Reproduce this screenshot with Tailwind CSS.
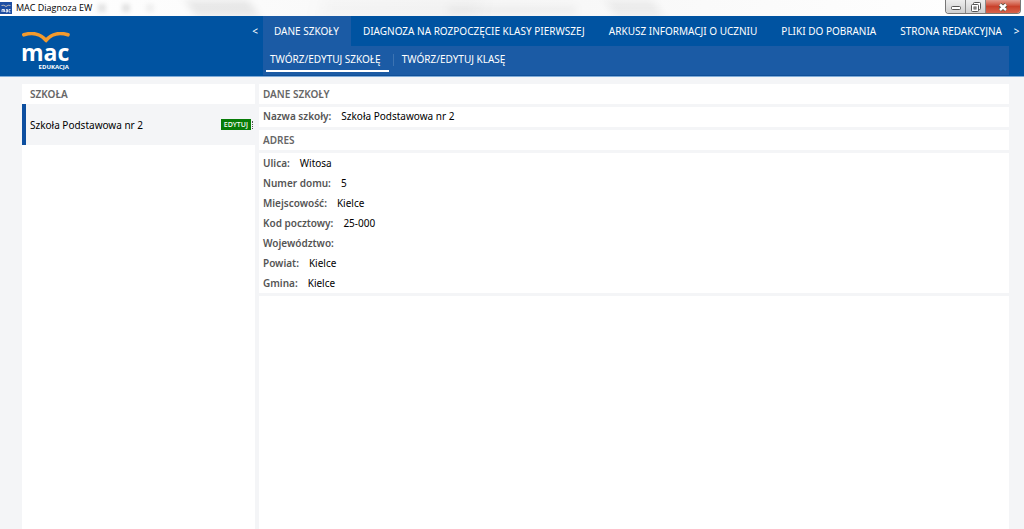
<!DOCTYPE html>
<html lang="pl">
<head>
<meta charset="utf-8">
<meta name="viewport" content="width=device-width, initial-scale=1">
<title>MAC Diagnoza EW</title>
<script src="https://cdn.jsdelivr.net/npm/@tailwindcss/browser@4"></script>
</head>
<body class="flex min-h-screen flex-col bg-[#f4f5f7] font-['Noto_Sans','Open_Sans',sans-serif] text-[10px] leading-5 text-black">
  <div class="relative flex h-4 items-center justify-between overflow-hidden bg-gradient-to-r from-white via-[#f7f7f7] to-white">
    <div class="absolute top-0 left-80 h-4 w-40 -skew-x-12 bg-black/3 blur-sm" aria-hidden="true"></div>
    <div class="absolute top-0 left-[190px] h-4 w-16 skew-x-30 bg-black/8 blur-xs" aria-hidden="true"></div>
    <div class="absolute top-0 left-[610px] h-4 w-12 skew-x-30 bg-black/5 blur-xs" aria-hidden="true"></div>
    <div class="absolute top-2 left-[448px] h-1 w-32 bg-black/8 blur-xs" aria-hidden="true"></div>
    <div class="absolute top-1 left-[98px] flex gap-4 blur-[2px]" aria-hidden="true"><span class="size-2 bg-black/10"></span><span class="size-2 bg-black/10"></span><span class="size-2 bg-black/5"></span></div>
    <div class="relative flex items-center gap-1">
      <svg class="h-3 w-3" viewBox="0 0 12 12" aria-hidden="true"><rect width="12" height="12" fill="#1f4fa3"/><path d="M1.500 3.500Q4 2.500 6 4.500 8 2.500 10.500 3.500" fill="none" stroke="#b9b7b8" stroke-width="1"/><path d="M2 10V7.500M2 7.500h2.500V10M3.300 7.500V10M6 7.500h1.500V10H6V8.800h1.500M10.500 7.500H9V10h1.500" fill="none" stroke="#fff" stroke-width=".8"/></svg>
      <h1 class="font-['Open_Sans',sans-serif] text-[9px] leading-4">MAC Diagnoza EW</h1>
    </div>
    <div class="relative mr-[3px] flex h-3.5 self-start overflow-hidden rounded-b border border-t-0 border-[#777]">
      <button class="flex w-5 items-center justify-center border-r border-[#888] bg-gradient-to-b from-[#eee] to-[#cfcfcf]" aria-label="Minimalizuj"><svg class="h-3 w-3" viewBox="0 0 12 12"><rect x="1.500" y="5.500" width="9" height="3" rx="1" fill="#fff" stroke="#555"/></svg></button>
      <button class="flex w-5 items-center justify-center border-r border-[#888] bg-gradient-to-b from-[#eee] to-[#cfcfcf]" aria-label="Przywróć"><svg class="h-3 w-3" viewBox="0 0 12 12"><g fill="#fff" stroke="#555"><rect x="3.500" y="1.500" width="7" height="7" rx="1"/><rect x="1.500" y="3.500" width="7" height="7" rx="1"/><rect x="4" y="6" width="2" height="2"/></g></svg></button>
      <button class="flex w-[34px] items-center justify-center bg-gradient-to-b from-[#e39a8c] via-[#c9412b] to-[#d8634a]" aria-label="Zamknij"><svg class="h-3 w-3" viewBox="0 0 12 12"><path d="M3 3.500l6 5.500M9 3.500L3 9" stroke="#554" stroke-width="4"/><path d="M3 3.500l6 5.500M9 3.500L3 9" stroke="#fff" stroke-width="2.400"/></svg></button>
    </div>
  </div>

  <header class="flex h-[61px] border-b border-[#7fabd8] bg-[#0053a1] text-white">
    <div class="w-[247px] shrink-0 pt-4 pl-[22px]">
      <svg class="h-[38px] w-12" viewBox="0 0 48 38" role="img" aria-label="mac Edukacja">
        <path d="M1.800 2.800C9 .5 18 1 24 8.500 30 1 39 .5 46 2.800" fill="none" stroke="#f39a2d" stroke-width="3.600" stroke-linecap="round" stroke-linejoin="round"/>
        <text x="-1" y="29" font-family="Open Sans, sans-serif" font-size="23" font-weight="700" fill="#fff">mac</text>
        <text x="47" y="37" text-anchor="end" font-family="Open Sans, sans-serif" font-size="6" font-weight="700" fill="#fff">EDUKACJA</text>
      </svg>
    </div>
    <button class="h-[30px] w-4 shrink-0 text-center" aria-label="Poprzednie">&lt;</button>
    <div class="min-w-0 flex-1">
      <nav class="flex h-[30px] whitespace-nowrap leading-[30px]" aria-label="Główne">
        <a href="#" class="bg-[#1b5ba5] pr-3 pl-[11px]" aria-current="page">DANE SZKOŁY</a>
        <a href="#" class="px-3">DIAGNOZA NA ROZPOCZĘCIE KLASY PIERWSZEJ</a>
        <a href="#" class="px-3">ARKUSZ INFORMACJI O UCZNIU</a>
        <a href="#" class="px-3">PLIKI DO POBRANIA</a>
        <a href="#" class="pl-3">STRONA REDAKCYJNA</a>
      </nav>
      <nav class="flex h-[30px] border-b border-[#0f4f98] bg-[#1b5ba5] px-[3px] whitespace-nowrap leading-[26px]" aria-label="Szkoła">
        <a href="#" class="h-[26px] border-b-2 border-white pr-2 pl-1" aria-current="page">TWÓRZ/EDYTUJ SZKOŁĘ</a>
        <span class="mt-2 ml-1 h-3 border-l border-white/15" aria-hidden="true"></span>
        <a href="#" class="h-[26px] px-2">TWÓRZ/EDYTUJ KLASĘ</a>
      </nav>
    </div>
    <button class="h-[30px] w-[15px] shrink-0 text-center" aria-label="Następne">&gt;</button>
  </header>

  <main class="flex flex-1 gap-1 pt-[7px] pr-[15px] pl-[22px]">
    <aside class="w-[233px] shrink-0 bg-white">
      <h2 class="px-2 font-semibold text-[#666]">SZKOŁA</h2>
      <div class="flex h-[41px] items-center justify-between border-l-4 border-[#0d4fa0] bg-[#f4f5f7] pr-0.5 pl-1">
        <span>Szkoła Podstawowa nr 2</span>
        <button class="flex items-center"><span class="h-[11px] bg-[#087c08] px-[3px] text-[7px] leading-[11px] font-medium text-white">EDYTUJ</span><span class="ml-px h-2 border-l border-dotted border-[#555]"></span></button>
      </div>
    </aside>
    <div class="flex min-w-0 flex-1 flex-col gap-[3px]">
      <h2 class="bg-white px-1 font-semibold text-[#666]">DANE SZKOŁY</h2>
      <dl class="bg-white px-1 pb-0.5 leading-[18px]"><div class="flex gap-2.5"><dt class="font-semibold text-[#555]">Nazwa szkoły:</dt><dd>Szkoła Podstawowa nr 2</dd></div></dl>
      <h2 class="bg-white px-1 font-semibold text-[#666]">ADRES</h2>
      <dl class="bg-white px-1 [&_div]:flex [&_div]:gap-2.5 [&_dt]:font-semibold [&_dt]:text-[#555]">
        <div><dt>Ulica:</dt><dd>Witosa</dd></div>
        <div><dt>Numer domu:</dt><dd>5</dd></div>
        <div><dt>Miejscowość:</dt><dd>Kielce</dd></div>
        <div><dt>Kod pocztowy:</dt><dd>25-000</dd></div>
        <div><dt>Województwo:</dt><dd></dd></div>
        <div><dt>Powiat:</dt><dd>Kielce</dd></div>
        <div><dt>Gmina:</dt><dd>Kielce</dd></div>
      </dl>
      <div class="flex-1 bg-white"></div>
    </div>
  </main>
</body>
</html>
